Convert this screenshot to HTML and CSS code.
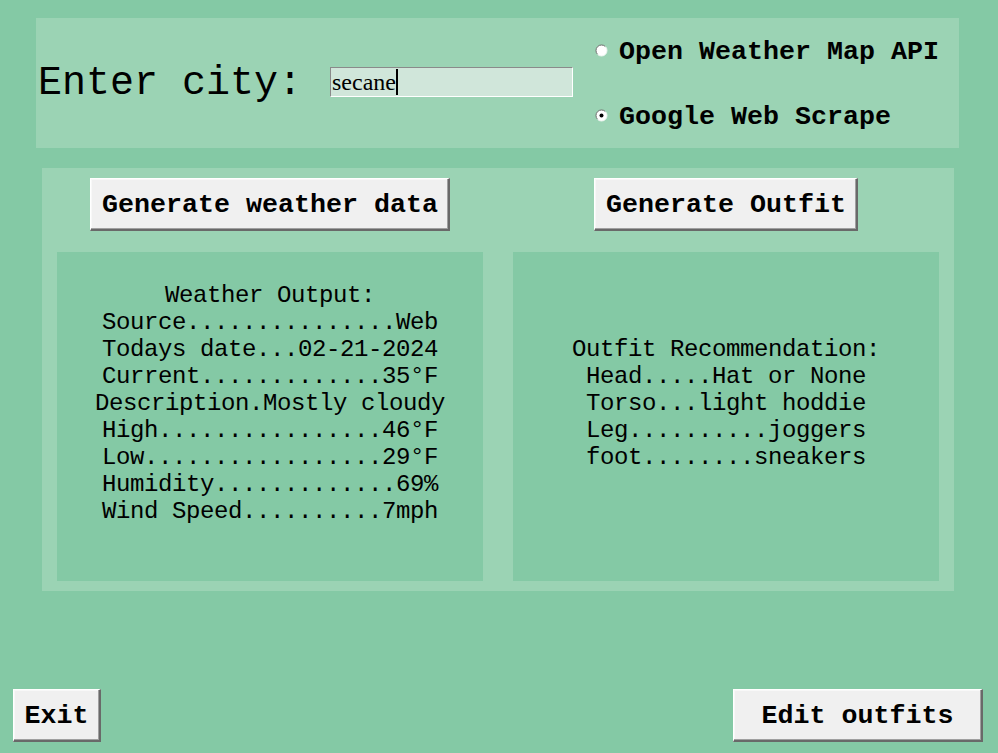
FILE: index.html
```html
<!DOCTYPE html>
<html>
<head>
<meta charset="utf-8">
<link rel="stylesheet" href="styles.css">
</head>
<body>
<div class="app">
  <div class="top-panel">
    <div class="city-label">Enter city:</div>
    <div class="entry"><span class="entry-text">secane</span><span class="caret"></span></div>
    <div class="radios">
      <div class="radio">
        <svg class="radio-dot" width="13" height="13" viewBox="0 0 13 13">
          <circle cx="6.5" cy="6.5" r="5.5" fill="#fff"/>
          <path d="M2.6 10.4 A5.5 5.5 0 0 1 10.4 2.6" fill="none" stroke="#6e6e6e" stroke-width="1"/>
          <path d="M10.4 2.6 A5.5 5.5 0 0 1 2.6 10.4" fill="none" stroke="#eef6f1" stroke-width="1"/>
        </svg>
        <span>Open Weather Map API</span>
      </div>
      <div class="radio">
        <svg class="radio-dot" width="13" height="13" viewBox="0 0 13 13">
          <circle cx="6.5" cy="6.5" r="5.5" fill="#fff"/>
          <path d="M2.6 10.4 A5.5 5.5 0 0 1 10.4 2.6" fill="none" stroke="#6e6e6e" stroke-width="1"/>
          <path d="M10.4 2.6 A5.5 5.5 0 0 1 2.6 10.4" fill="none" stroke="#eef6f1" stroke-width="1"/>
          <circle cx="6.5" cy="6.5" r="2" fill="#000"/>
        </svg>
        <span>Google Web Scrape</span>
      </div>
    </div>
  </div>

  <div class="mid-panel">
    <div class="btn-cell"><button class="btn btn-gen">Generate weather data</button></div>
    <div class="btn-cell"><button class="btn btn-gen">Generate Outfit</button></div>
    <div class="output">
      <div class="line">Weather Output:</div>
      <div class="line">Source...............Web</div>
      <div class="line">Todays date...02-21-2024</div>
      <div class="line">Current.............35°F</div>
      <div class="line">Description.Mostly cloudy</div>
      <div class="line">High................46°F</div>
      <div class="line">Low.................29°F</div>
      <div class="line">Humidity.............69%</div>
      <div class="line">Wind Speed..........7mph</div>
      <div class="line">&nbsp;</div>
    </div>
    <div class="output">
      <div class="line">Outfit Recommendation:</div>
      <div class="line">Head.....Hat or None</div>
      <div class="line">Torso...light hoddie</div>
      <div class="line">Leg..........joggers</div>
      <div class="line">foot........sneakers</div>
      <div class="line">&nbsp;</div>
    </div>
  </div>

  <div class="bottom-bar">
    <button class="btn btn-exit">Exit</button>
    <button class="btn btn-edit">Edit outfits</button>
  </div>
</div>
</body>
</html>
```

FILE: styles.css
```css
html, body {
  margin: 0;
  padding: 0;
}
body {
  background: #84c9a5;
  width: 998px;
  height: 753px;
  overflow: hidden;
  font-family: "Liberation Mono", "Courier New", monospace;
  color: #000;
}
.app {
  display: flex;
  flex-direction: column;
  height: 753px;
}
.top-panel {
  margin: 18px 39px 0 36px;
  height: 130px;
  background: #9bd3b4;
  display: flex;
  align-items: center;
}
.city-label {
  font-size: 40px;
  line-height: 45px;
  white-space: pre;
  width: 262px;
  margin-left: 2px;
  margin-top: 1px;
}
.entry {
  margin-left: 30px;
  width: 243px;
  height: 30px;
  box-sizing: border-box;
  background: #d0e6da;
  border-top: 1px solid #8a8a8a;
  border-left: 1px solid #8a8a8a;
  border-bottom: 1px solid #ffffff;
  border-right: 1px solid #ffffff;
  display: flex;
  align-items: center;
  padding-left: 1px;
  margin-bottom: 2px;
}
.entry-text {
  font-family: "Liberation Serif", "Times New Roman", serif;
  font-size: 24px;
  line-height: 27px;
}
.caret {
  width: 2px;
  height: 26px;
  background: #000;
}
.radios {
  margin-left: 22px;
  display: flex;
  flex-direction: column;
  align-self: stretch;
}
.radio {
  height: 65px;
  display: flex;
  align-items: center;
  font-weight: bold;
  font-size: 26.67px;
  white-space: pre;
}
.radio span {
  padding-top: 3px;
}
.radio-dot {
  margin-right: 11px;
  flex: none;
}
.mid-panel {
  margin: 20px 44px 0 42px;
  height: 423px;
  box-sizing: border-box;
  padding: 10px 15px;
  background: #9bd3b4;
  display: grid;
  grid-template-columns: 426px 426px;
  grid-template-rows: 53px 329px;
  column-gap: 30px;
  row-gap: 21px;
}
.btn-cell {
  display: flex;
  justify-content: center;
}
.btn {
  font-family: "Liberation Mono", "Courier New", monospace;
  font-weight: bold;
  font-size: 26.67px;
  line-height: 30px;
  height: 53px;
  box-sizing: border-box;
  padding: 1px 10px 0 10px;
  margin: 0;
  color: #000;
  background: #f0f0f0;
  border-style: solid;
  border-width: 1px 2px 2px 1px;
  border-color: #ffffff #696969 #696969 #ffffff;
  box-shadow: inset -1px -1px 0 #a0a0a0, inset 1px 1px 0 #f8f8f8;
  border-radius: 0;
  white-space: pre;
}
.btn-gen {
  padding: 1px 10px 0 11px;
}
.output {
  background: #84c9a5;
  display: flex;
  flex-direction: column;
  justify-content: center;
  align-items: center;
  font-size: 24px;
  line-height: 27px;
  letter-spacing: -0.4px;
}
.line {
  white-space: pre;
  text-align: center;
}
.bottom-bar {
  margin-top: auto;
  display: flex;
  justify-content: space-between;
  padding: 0 15px 11px 13px;
}
.btn-exit {
  width: 88px;
  padding: 1px 0 0 0;
}
.btn-edit {
  width: 250px;
  padding: 1px 0 0 0;
}
```
